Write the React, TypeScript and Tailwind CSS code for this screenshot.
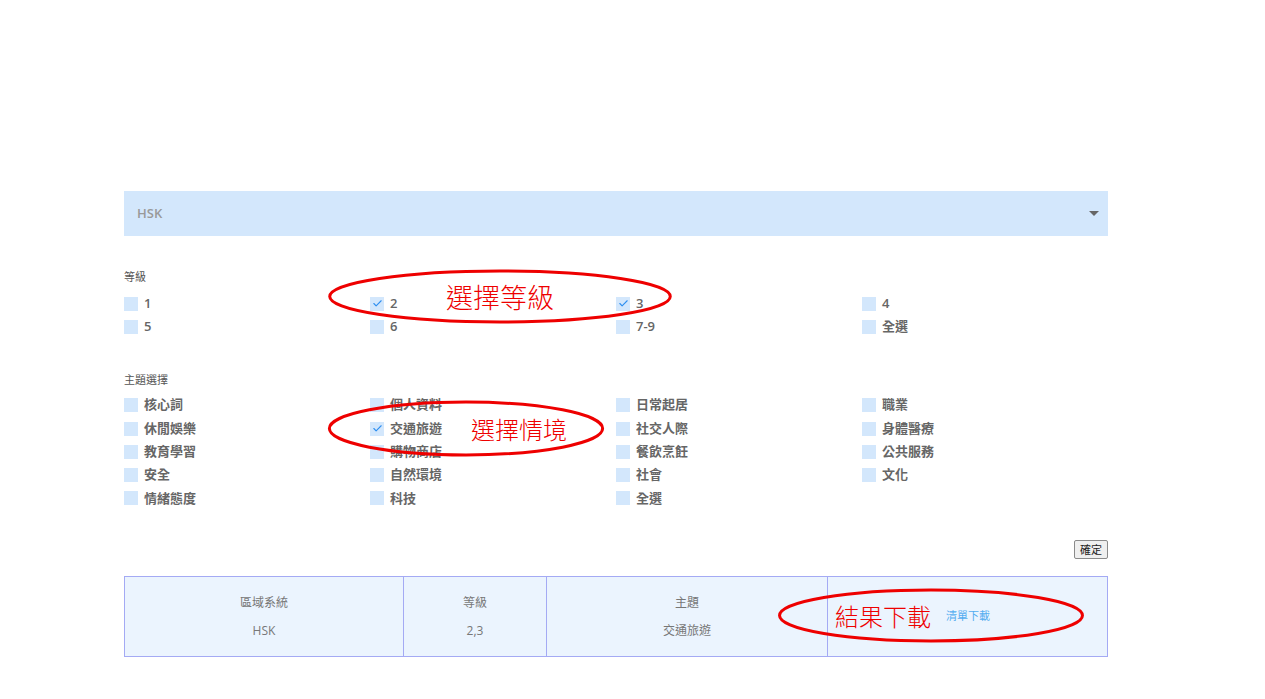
import { Check } from 'lucide-react';

const levels = [
  { label: '1', checked: false },
  { label: '2', checked: true },
  { label: '3', checked: true },
  { label: '4', checked: false },
  { label: '5', checked: false },
  { label: '6', checked: false },
  { label: '7-9', checked: false },
  { label: '全選', checked: false },
];

const themes = [
  '核心詞', '個人資料', '日常起居', '職業',
  '休閒娛樂', '交通旅遊', '社交人際', '身體醫療',
  '教育學習', '購物商店', '餐飲烹飪', '公共服務',
  '安全', '自然環境', '社會', '文化',
  '情緒態度', '科技', '全選',
];

const font = { fontFamily: '"Open Sans", "Noto Sans CJK TC", sans-serif' };
const noteFont = { fontFamily: '"Noto Sans CJK TC", sans-serif' };

function Box({ label, checked }: { label: string; checked?: boolean }) {
  return (
    <label className="flex items-center h-[23.3px] gap-[6px]">
      <span className="w-[14px] h-[14px] bg-[#d3e7fc] flex items-center justify-center">
        {checked && <Check className="w-[11px] h-[11px] text-[#2f8ff0]" strokeWidth={2.4} />}
      </span>
      <span className="text-[13px] font-semibold text-[#666]">{label}</span>
    </label>
  );
}

function Ring({ className }: { className: string }) {
  return (
    <div className={`absolute pointer-events-none ${className}`}>
      <svg className="absolute inset-0 w-full h-full overflow-visible" preserveAspectRatio="none" viewBox="0 0 100 100">
        <ellipse cx="50" cy="50" rx="49.5" ry="48" fill="none" stroke="#ee0000" strokeWidth="3" vectorEffect="non-scaling-stroke" />
      </svg>
    </div>
  );
}

export default function App() {
  return (
    <div className="min-h-[699px] bg-white" style={font}>
      <div className="relative ml-[124px] w-[984px] pt-[191px]">
        <div className="h-[45px] bg-[#d3e7fc] flex items-center justify-between pl-[13px] pr-[9px]">
          <span className="text-[13px] font-semibold text-[#999]">HSK</span>
          <span className="w-0 h-0 border-l-[5px] border-r-[5px] border-t-[5px] border-l-transparent border-r-transparent border-t-[#666]" />
        </div>

        <div className="mt-[32px] text-[11px] leading-[18px] text-[#555]">等級</div>
        <div className="mt-[6px] grid grid-cols-4">
          {levels.map((l) => (
            <Box key={l.label} label={l.label} checked={l.checked} />
          ))}
        </div>

        <div className="mt-[32px] text-[11px] leading-[18px] text-[#555]">主題選擇</div>
        <div className="mt-[5px] grid grid-cols-4">
          {themes.map((t, i) => (
            <Box key={i} label={t} checked={t === '交通旅遊'} />
          ))}
        </div>

        <div className="mt-[30px] flex justify-end">
          <button className="h-[19px] px-[5px] text-[11px] leading-none text-[#222] bg-[#efefef] border border-[#8a8a8a] rounded-[2px]">
            確定
          </button>
        </div>

        <div className="mt-[17px] flex h-[81px] bg-[#ebf4fe] border border-[#a4aaf4] text-[12px] text-[#777]">
          <div className="w-[279px] flex flex-col items-center justify-center gap-[10px] pt-[1px] border-r border-[#a4aaf4]">
            <span>區域系統</span>
            <span>HSK</span>
          </div>
          <div className="w-[143px] flex flex-col items-center justify-center gap-[10px] pt-[1px] border-r border-[#a4aaf4]">
            <span>等級</span>
            <span>2,3</span>
          </div>
          <div className="w-[281px] flex flex-col items-center justify-center gap-[10px] pt-[1px] border-r border-[#a4aaf4]">
            <span>主題</span>
            <span>交通旅遊</span>
          </div>
          <div className="flex-1 flex items-center pl-[118px]">
            <a className="text-[11px] text-[#55adf0]">清單下載</a>
          </div>
        </div>

        <Ring className="left-[204px] top-[270px] w-[344px] h-[53px]" />
        <span className="absolute left-[322px] top-[280px] text-[27px] leading-[34px] text-[#ee0000] font-light" style={noteFont}>選擇等級</span>
        <Ring className="left-[204px] top-[401px] w-[276px] h-[55px]" />
        <span className="absolute left-[347px] top-[413px] text-[24px] leading-[32px] text-[#ee0000] font-light" style={noteFont}>選擇情境</span>
        <Ring className="left-[654px] top-[589px] w-[306px] h-[53px]" />
        <span className="absolute left-[711px] top-[600px] text-[24px] leading-[32px] text-[#ee0000] font-light" style={noteFont}>結果下載</span>
      </div>
    </div>
  );
}
